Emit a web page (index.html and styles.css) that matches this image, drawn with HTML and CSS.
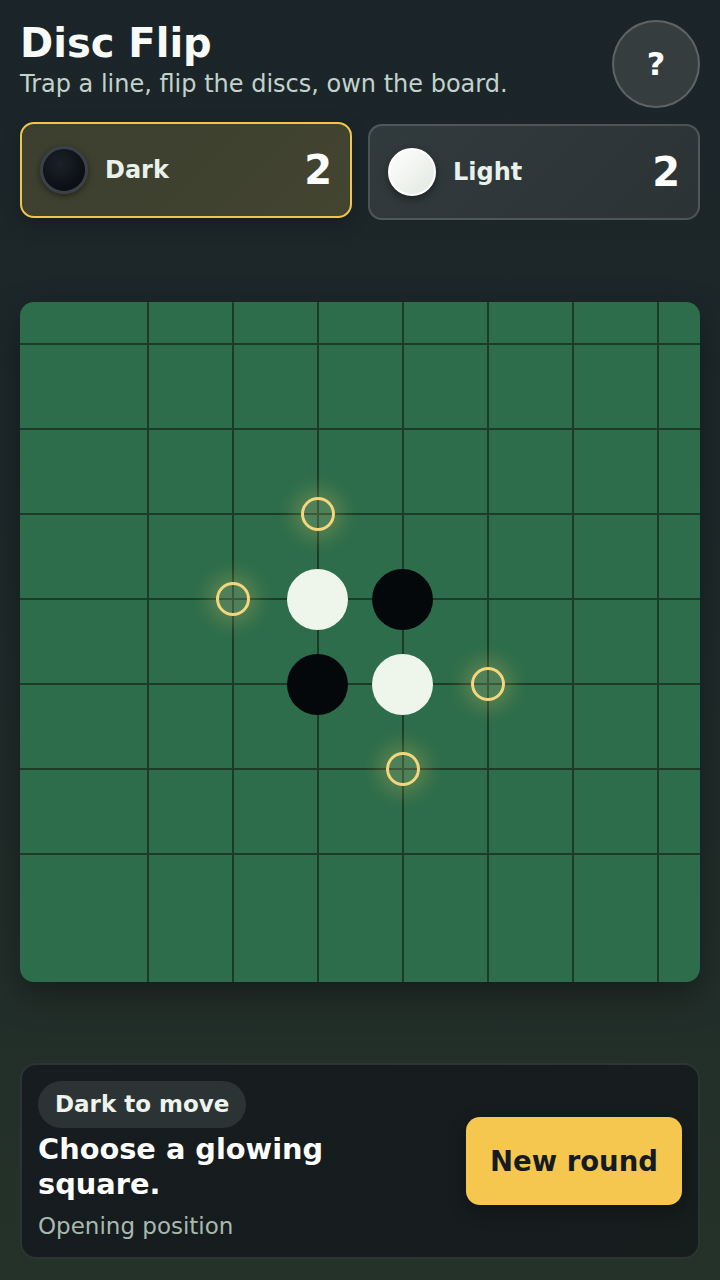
FILE: index.html
```html
<!DOCTYPE html>
<html lang="en">
<head>
<meta charset="utf-8">
<title>Disc Flip</title>
<link rel="stylesheet" href="styles.css">
</head>
<body>
<div class="app">
  <header class="top">
    <div class="titles">
      <h1 class="title">Disc Flip</h1>
      <p class="tagline">Trap a line, flip the discs, own the board.</p>
    </div>
    <button class="help" type="button">?</button>
  </header>

  <section class="scores">
    <div class="score score-active">
      <span class="chip chip-dark"></span>
      <span class="score-name">Dark</span>
      <span class="score-count">2</span>
    </div>
    <div class="score">
      <span class="chip chip-light"></span>
      <span class="score-name">Light</span>
      <span class="score-count">2</span>
    </div>
  </section>

  <div class="board">
    <div class="cell"></div><div class="cell"></div><div class="cell"></div><div class="cell"></div><div class="cell"></div><div class="cell"></div><div class="cell"></div><div class="cell"></div>
    <div class="cell"></div><div class="cell"></div><div class="cell"></div><div class="cell"></div><div class="cell"></div><div class="cell"></div><div class="cell"></div><div class="cell"></div>
    <div class="cell"></div><div class="cell"></div><div class="cell"></div><div class="cell"><span class="hint"></span></div><div class="cell"></div><div class="cell"></div><div class="cell"></div><div class="cell"></div>
    <div class="cell"></div><div class="cell"></div><div class="cell"><span class="hint"></span></div><div class="cell"><span class="disc disc-light"></span></div><div class="cell"><span class="disc disc-dark"></span></div><div class="cell"></div><div class="cell"></div><div class="cell"></div>
    <div class="cell"></div><div class="cell"></div><div class="cell"></div><div class="cell"><span class="disc disc-dark"></span></div><div class="cell"><span class="disc disc-light"></span></div><div class="cell"><span class="hint"></span></div><div class="cell"></div><div class="cell"></div>
    <div class="cell"></div><div class="cell"></div><div class="cell"></div><div class="cell"></div><div class="cell"><span class="hint"></span></div><div class="cell"></div><div class="cell"></div><div class="cell"></div>
    <div class="cell"></div><div class="cell"></div><div class="cell"></div><div class="cell"></div><div class="cell"></div><div class="cell"></div><div class="cell"></div><div class="cell"></div>
    <div class="cell"></div><div class="cell"></div><div class="cell"></div><div class="cell"></div><div class="cell"></div><div class="cell"></div><div class="cell"></div><div class="cell"></div>
  </div>

  <footer class="status">
    <div class="status-info">
      <span class="pill">Dark to move</span>
      <h2 class="status-title">Choose a glowing square.</h2>
      <p class="status-note">Opening position</p>
    </div>
    <button class="new-round" type="button">New round</button>
  </footer>
</div>
</body>
</html>
```

FILE: styles.css
```css
* { box-sizing: border-box; }

html, body {
  margin: 0;
  padding: 0;
  height: 100%;
}

body {
  font-family: "DejaVu Sans", Verdana, sans-serif;
  color: #f3f6f2;
  background: linear-gradient(180deg, #1b2529 0%, #1e292a 45%, #253229 100%);
}

.app {
  min-height: 100vh;
  padding: 20px 20px 21px;
  display: flex;
  flex-direction: column;
}

.top {
  display: flex;
  justify-content: space-between;
  align-items: flex-start;
}

.title {
  margin: 0;
  font-size: 40px;
  line-height: 46px;
  font-weight: 700;
  color: #f7faf6;
}

.tagline {
  margin: 4px 0 0;
  font-size: 24px;
  line-height: 28px;
  color: #c3d2cb;
}

.help {
  width: 88px;
  height: 88px;
  border-radius: 50%;
  border: 2px solid rgba(255, 255, 255, 0.2);
  background: #353d3f;
  color: #ffffff;
  font-family: "DejaVu Sans", sans-serif;
  font-weight: 700;
  font-size: 32px;
  padding: 0;
  flex: none;
}

.scores {
  margin-top: 16px;
  display: grid;
  grid-template-columns: 1fr 1fr;
  gap: 16px;
}

.score {
  height: 96px;
  border-radius: 14px;
  border: 2px solid rgba(255, 255, 255, 0.16);
  background: linear-gradient(135deg, #313a3c, #2b3335);
  display: flex;
  align-items: center;
  padding: 0 18px 0 18px;
}

.score-active {
  transform: translateY(-2px);
  border-color: #efc54e;
  background: linear-gradient(135deg, #3c3e2f, #434531);
  box-shadow: 0 6px 18px rgba(0, 0, 0, 0.25);
}

.chip {
  width: 48px;
  height: 48px;
  border-radius: 50%;
  flex: none;
}

.chip-dark {
  background: radial-gradient(circle at 40% 35%, #1c212a, #0b0e13 70%);
  border: 3px solid #3a414a;
  box-shadow: 0 2px 6px rgba(0, 0, 0, 0.45);
}

.chip-light {
  background: linear-gradient(135deg, #ffffff, #e2e8e0);
  border: 2px solid #ffffff;
  box-shadow: 0 3px 8px rgba(0, 0, 0, 0.4);
}

.score-name {
  margin-left: 17px;
  font-size: 24px;
  font-weight: 700;
  color: #e8f1ea;
  flex: 1;
}

.score-count {
  font-size: 40px;
  font-weight: 700;
  color: #ffffff;
}

.board {
  margin: auto 0;
  width: 680px;
  height: 680px;
  border-radius: 14px;
  background-color: #2e6d4b;
  background-image:
    repeating-linear-gradient(90deg, transparent 0 42px, #1c3c27 42px 44px, transparent 44px 85px),
    repeating-linear-gradient(180deg, transparent 0 41px, #1c3c27 41px 43px, transparent 43px 85px);
  background-size: 595px 100%, 100% 595px;
  background-position: 85px 0, 0 0;
  background-repeat: no-repeat;
  box-shadow: 0 14px 34px rgba(0, 0, 0, 0.35);
  display: grid;
  grid-template-columns: repeat(8, 85px);
  grid-template-rows: repeat(8, 85px);
}

.cell {
  display: flex;
  align-items: center;
  justify-content: center;
}

.disc {
  width: 61px;
  height: 61px;
  border-radius: 50%;
}

.disc-light { background: #eef5eb; }
.disc-dark { background: #05080b; }

.hint {
  width: 34px;
  height: 34px;
  border-radius: 50%;
  border: 3px solid #f4d67c;
  background: rgba(255, 235, 160, 0.16);
  box-shadow: 0 0 18px 8px rgba(240, 205, 95, 0.22);
}

.status {
  border-radius: 16px;
  border: 2px solid rgba(255, 255, 255, 0.1);
  background: linear-gradient(135deg, #161c1f, #161d1d);
  padding: 16px;
  display: flex;
  align-items: center;
  justify-content: space-between;
  gap: 16px;
}

.status-info {
  display: flex;
  flex-direction: column;
  align-items: flex-start;
}

.pill {
  background: #2c3335;
  border-radius: 999px;
  padding: 10px 17px;
  font-size: 23px;
  line-height: 27px;
  font-weight: 700;
  color: #eef3ee;
}

.status-title {
  margin: 4px 0 0;
  font-size: 28.8px;
  line-height: 35px;
  font-weight: 700;
  color: #ffffff;
  max-width: 400px;
}

.status-note {
  margin: 10px 0 0;
  font-size: 23px;
  line-height: 29px;
  color: #a9b9ae;
}

.new-round {
  flex: none;
  width: 216px;
  height: 88px;
  border: none;
  border-radius: 14px;
  background: #f5c74e;
  color: #151b22;
  font-family: "DejaVu Sans", sans-serif;
  font-weight: 700;
  font-size: 27.5px;
  box-shadow: 0 6px 18px rgba(0, 0, 0, 0.3);
}
```
